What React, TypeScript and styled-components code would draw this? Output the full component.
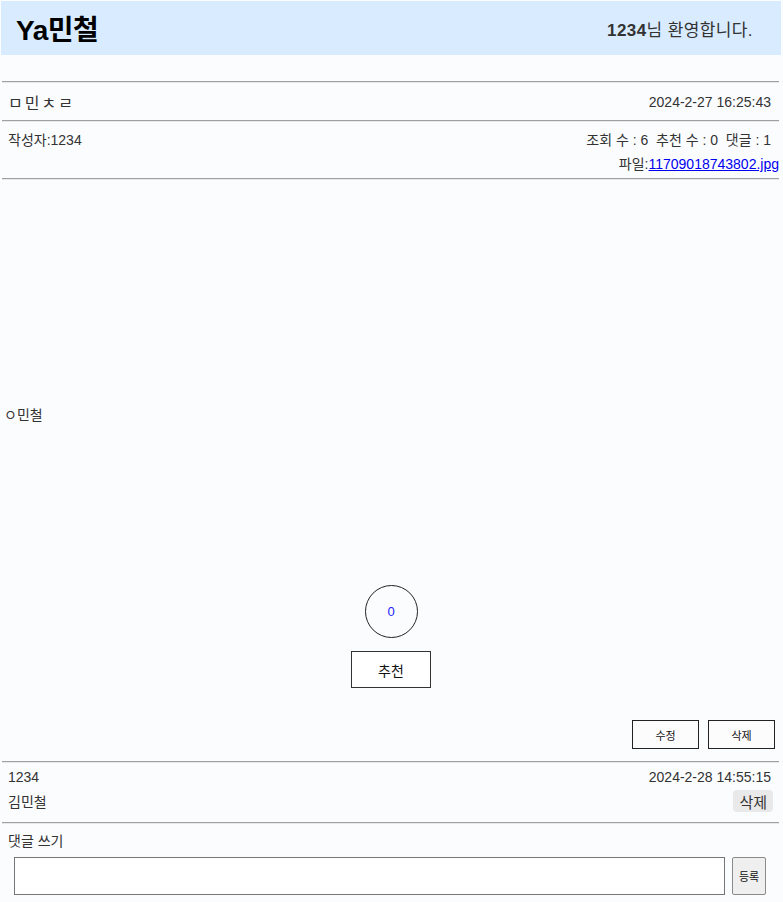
import styled, { createGlobalStyle } from 'styled-components'

const GlobalStyle = createGlobalStyle`
  body {
    margin: 0;
    background: #fbfcfe;
    font-family: "Liberation Sans", "Noto Sans CJK KR", sans-serif;
    color: #333;
  }
`

const Page = styled.div`
  padding: 1px 2px 0 1px;
`

const Header = styled.header`
  height: 54px;
  background: #d9ecff;
  display: flex;
  align-items: center;
  justify-content: space-between;
  padding: 0 28px 0 15px;
  margin-bottom: 26px;
`

const Logo = styled.h1`
  margin: 0;
  font-size: 28px;
  font-weight: bold;
  color: #000;
  letter-spacing: -0.5px;
`

const Welcome = styled.div`
  font-size: 17px;
  letter-spacing: 0.4px;
  color: #333;
  b {
    font-weight: bold;
  }
`

const Divider = styled.hr`
  margin: 0 2px 0 1px;
  border: 0;
  border-top: 1px solid #a0a0a0;
  border-bottom: 1px solid #e8e8e8;
  height: 0;
`

const Row = styled.div<{ $h?: number }>`
  display: flex;
  justify-content: space-between;
  align-items: center;
  height: ${(p) => p.$h ?? 24}px;
  padding: 0 10px 0 7px;
  font-size: 14px;
`

const Title = styled.span`
  font-size: 16px;
  letter-spacing: 2px;
`

const InfoBlock = styled.div`
  padding: 5px 0 3px;
`

const FileLine = styled.div`
  display: flex;
  justify-content: flex-end;
  font-size: 14px;
  padding-right: 2px;
  height: 24px;
  align-items: center;
  a {
    color: #00e;
  }
`

const Content = styled.div`
  padding: 224px 3px 0;
  font-size: 14px;
  height: 181px;
`

const LikeArea = styled.div`
  display: flex;
  flex-direction: column;
  align-items: center;
  gap: 13px;
`

const LikeCount = styled.div`
  width: 51px;
  height: 51px;
  border: 1px solid #222;
  border-radius: 50%;
  display: flex;
  align-items: center;
  justify-content: center;
  color: #2222ff;
  font-size: 13px;
`

const LikeButton = styled.button`
  width: 80px;
  height: 37px;
  border: 1px solid #333;
  background: #fff;
  font-family: inherit;
  font-size: 14px;
  color: #111;
`

const Actions = styled.div`
  display: flex;
  justify-content: flex-end;
  gap: 9px;
  padding: 32px 6px 12px 0;
`

const SmallButton = styled.button`
  width: 67px;
  height: 29px;
  border: 1px solid #222;
  background: #fdfcfc;
  font-family: inherit;
  font-size: 11px;
  color: #111;
`

const CommentBlock = styled.div`
  padding: 2px 0 9px;
`

const GrayButton = styled.button`
  border: 0;
  border-radius: 4px;
  background: #e9e9e9;
  font-family: inherit;
  font-size: 15px;
  color: #333;
  padding: 0 6px;
  height: 22px;
  margin-right: -2px;
`

const WriteBlock = styled.div`
  padding: 6px 0 0 7px;
  font-size: 14px;
`

const WriteRow = styled.div`
  display: flex;
  gap: 7px;
  padding: 7px 0 0 6px;
`

const TextInput = styled.input`
  flex: 0 0 711px;
  height: 38px;
  box-sizing: border-box;
  border: 1px solid #767676;
  background: #fff;
`

const SubmitButton = styled.button`
  width: 34px;
  height: 38px;
  border: 1px solid #8a8a8a;
  border-radius: 2px;
  background: #efefef;
  font-family: inherit;
  font-size: 11px;
  color: #111;
  padding: 0;
`

export default function App() {
  return (
    <>
      <GlobalStyle />
      <Page>
        <Header>
          <Logo>Ya민철</Logo>
          <Welcome>
            <b>1234</b>님 환영합니다.
          </Welcome>
        </Header>
        <Divider />
        <Row $h={37}>
          <Title>ㅁ민ㅊㄹ</Title>
          <span>2024-2-27 16:25:43</span>
        </Row>
        <Divider />
        <InfoBlock>
          <Row $h={24}>
            <span>작성자:1234</span>
            <span>조회 수 : 6 &nbsp;추천 수 : 0 &nbsp;댓글 : 1</span>
          </Row>
          <FileLine>
            <span>
              파일:<a href="#">11709018743802.jpg</a>
            </span>
          </FileLine>
        </InfoBlock>
        <Divider />
        <Content>ㅇ민철</Content>
        <LikeArea>
          <LikeCount>0</LikeCount>
          <LikeButton>추천</LikeButton>
        </LikeArea>
        <Actions>
          <SmallButton>수정</SmallButton>
          <SmallButton>삭제</SmallButton>
        </Actions>
        <Divider />
        <CommentBlock>
          <Row $h={24}>
            <span>1234</span>
            <span>2024-2-28 14:55:15</span>
          </Row>
          <Row $h={24}>
            <span>김민철</span>
            <GrayButton>삭제</GrayButton>
          </Row>
        </CommentBlock>
        <Divider />
        <WriteBlock>
          <div>댓글 쓰기</div>
          <WriteRow>
            <TextInput />
            <SubmitButton>등록</SubmitButton>
          </WriteRow>
        </WriteBlock>
      </Page>
    </>
  )
}
